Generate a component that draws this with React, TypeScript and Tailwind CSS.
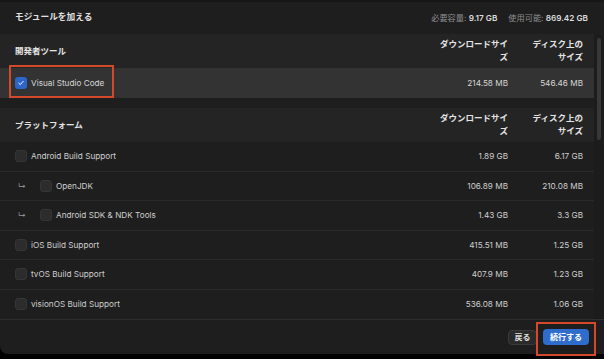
import React from "react";

const FONT = { fontFamily: 'Inter, "Noto Sans CJK JP", sans-serif' };

function Box({ checked }: { checked?: boolean }) {
  if (checked) {
    return (
      <div className="w-[12px] h-[12px] rounded-[3px] bg-[#2b66c8] flex items-center justify-center shrink-0">
        <svg width="8" height="8" viewBox="0 0 8 8">
          <path d="M1.8 4.2 L3.3 5.6 L6.2 2.4" stroke="#fff" strokeWidth="1" fill="none" strokeLinecap="round" strokeLinejoin="round" />
        </svg>
      </div>
    );
  }
  return <div className="w-[12px] h-[12px] rounded-[3px] bg-[#2c2c2c] border border-[#353535] shrink-0" />;
}

function SectionHeader({ title }: { title: string }) {
  return (
    <div className="h-[34px] bg-[#242424] flex items-center text-[8.5px] font-bold text-[#e4e4e4] leading-[13px]">
      <div className="flex-1 pl-[15px]">{title}</div>
      <div className="w-[80px] text-right">
        ダウンロードサイ
        <br />ズ
      </div>
      <div className="w-[75px] text-right">
        ディスク上の
        <br />
        サイズ
      </div>
      <div className="w-[11px]" />
    </div>
  );
}

type Row = { name: string; dl: string; disk: string; sub?: boolean };

const rows: Row[] = [
  { name: "Android Build Support", dl: "1.89 GB", disk: "6.17 GB" },
  { name: "OpenJDK", dl: "106.89 MB", disk: "210.08 MB", sub: true },
  { name: "Android SDK & NDK Tools", dl: "1.43 GB", disk: "3.3 GB", sub: true },
  { name: "iOS Build Support", dl: "415.51 MB", disk: "1.25 GB" },
  { name: "tvOS Build Support", dl: "407.9 MB", disk: "1.23 GB" },
  { name: "visionOS Build Support", dl: "536.08 MB", disk: "1.06 GB" },
];

function ItemRow({ r, last }: { r: Row; last: boolean }) {
  return (
    <div
      className={
        "h-[29.5px] flex items-center text-[8.2px] text-[#cfcfcf] " +
        (last ? "" : "border-b border-[#2a2a2a]")
      }
    >
      <div className="flex-1 flex items-center">
        {r.sub ? (
          <>
            <span className="w-[40px] pl-[18px] text-[#9a9a9a] text-[8px]">↳</span>
            <Box />
            <span className="ml-[4px]">{r.name}</span>
          </>
        ) : (
          <>
            <span className="w-[15px]" />
            <Box />
            <span className="ml-[4px]">{r.name}</span>
          </>
        )}
      </div>
      <div className="w-[80px] text-right">{r.dl}</div>
      <div className="w-[75px] text-right">{r.disk}</div>
      <div className="w-[11px]" />
    </div>
  );
}

export default function App() {
  return (
    <div className="w-[604px] h-[359px] bg-black relative overflow-hidden" style={FONT}>
      <div className="h-[354px] bg-[#1e1e1e] rounded-bl-[8px] flex flex-col">
        <div className="h-[2px] bg-[#161616]" />
        <div className="h-[32px] flex items-center justify-between pl-[15px] pr-[16px]">
          <span className="text-[8.7px] font-bold text-[#e2e2e2]">モジュールを加える</span>
          <span className="text-[8.2px] text-[#8e8e8e]">
            必要容量: <span className="text-[#dcdcdc] font-semibold">9.17 GB</span>
            <span className="inline-block w-[11px]" />
            使用可能: <span className="text-[#dcdcdc] font-semibold">869.42 GB</span>
          </span>
        </div>
        <div className="flex flex-1">
          <div className="w-[594px] flex flex-col">
            <SectionHeader title="開発者ツール" />
            <div className="h-[30px] bg-[#333333] flex items-center text-[8.2px] text-[#d6d6d6]">
              <div className="flex-1 flex items-center pl-[15px]">
                <Box checked />
                <span className="ml-[4px]">Visual Studio Code</span>
              </div>
              <div className="w-[80px] text-right">214.58 MB</div>
              <div className="w-[75px] text-right">546.46 MB</div>
              <div className="w-[11px]" />
            </div>
            <div className="h-[10px]" />
            <SectionHeader title="プラットフォーム" />
            {rows.map((r, i) => (
              <ItemRow key={r.name} r={r} last={i === rows.length - 1} />
            ))}
          </div>
          <div className="w-[10px] bg-[#1c1c1c] pl-[3px] pt-[4px]">
            <div className="w-[3.5px] h-[102px] rounded-full bg-[#383838]" />
          </div>
        </div>
        <div className="h-[35px] border-t-[1.5px] border-[#2e2e2e] flex items-center justify-end gap-[6px] pr-[15px]">
          <button className="h-[15px] w-[29px] rounded-[4px] bg-[#2a2a2a] border border-[#3a3a3a] text-[8px] font-bold text-[#dedede] flex items-center justify-center">
            戻る
          </button>
          <button className="h-[16px] w-[46px] rounded-[4px] bg-[#2f6dcc] text-[8px] font-bold text-white flex items-center justify-center">
            続行する
          </button>
        </div>
      </div>
      <div className="absolute left-[9px] top-[65px] w-[105px] h-[33px] border-2 border-solid border-[#d4482b] z-10" />
      <div className="absolute left-[536px] top-[322px] w-[60px] h-[34px] border-2 border-solid border-[#d4482b] z-10" />
    </div>
  );
}
